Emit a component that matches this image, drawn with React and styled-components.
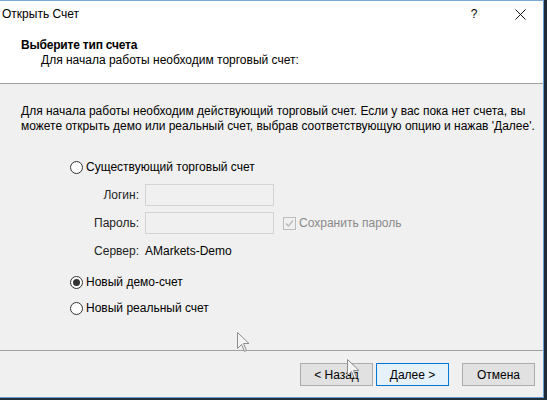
import React from 'react';
import styled, { createGlobalStyle } from 'styled-components';

const GlobalStyle = createGlobalStyle`
  html, body {
    margin: 0;
    padding: 0;
    background: #f0f0f0;
  }
  body {
    font-family: "Liberation Sans", Arial, sans-serif;
    font-size: 12px;
    color: #000;
  }
`;

const Screen = styled.div`
  position: relative;
  width: 547px;
  height: 400px;
  overflow: hidden;
  background: #1f2a36;
`;

const Window = styled.div`
  width: 544px;
  height: 398px;
  display: flex;
  flex-direction: column;
  background: #f0f0f0;
  border-right: 1px solid #6b9bcb;
  border-bottom: 1px solid #6b9bcb;
  border-top: 1px solid #7aa6d2;
  box-sizing: border-box;
`;

const TitleBar = styled.div`
  height: 28px;
  display: flex;
  align-items: center;
  background: #fff;
  padding-left: 2px;
`;

const TitleText = styled.div`
  flex: 1;
  margin-top: -2px;
`;

const TitleButton = styled.div`
  width: 46px;
  height: 28px;
  display: flex;
  align-items: center;
  justify-content: center;
  margin-top: -2px;
`;

const Header = styled.div`
  height: 55px;
  background: #fff;
  border-bottom: 1px solid #a0a0a0;
  padding: 9px 0 0 21px;
  box-sizing: border-box;
`;

const HeaderTitle = styled.div`
  font-weight: bold;
  line-height: 15px;
  letter-spacing: -0.2px;
`;

const HeaderSub = styled.div`
  padding-left: 20px;
  line-height: 15px;
`;

const Body = styled.div`
  flex: 1;
  padding: 20px 0 0 21px;
  border-bottom: 1px solid #a0a0a0;
  box-sizing: border-box;
`;

const Intro = styled.p`
  margin: 0;
  line-height: 15px;
  width: 515px;
`;

const Options = styled.div`
  margin: 25px 0 0 49px;
  display: flex;
  flex-direction: column;
`;

const RadioRow = styled.label`
  display: flex;
  align-items: center;
  gap: 3px;
  height: 16px;
  margin-top: ${p => p.$gap || 0}px;
`;

const RadioCircle = styled.span`
  width: 11px;
  height: 11px;
  border: 1px solid #333;
  border-radius: 50%;
  background: #fff;
  display: flex;
  align-items: center;
  justify-content: center;
  &::after {
    content: '';
    width: 7px;
    height: 7px;
    border-radius: 50%;
    background: ${p => (p.$checked ? '#333' : 'transparent')};
  }
`;

const Fields = styled.div`
  display: grid;
  grid-template-columns: 65px 129px auto;
  column-gap: 6px;
  row-gap: 6px;
  margin: 9px 0 0 4px;
  align-items: center;
`;

const FieldLabel = styled.span`
  text-align: right;
  color: #222;
`;

const Input = styled.div`
  height: 20px;
  border: 1px solid #d4d4d4;
  background: #f0f0f0;
`;

const CheckRow = styled.span`
  display: flex;
  align-items: center;
  gap: 3px;
  color: #8a8a8a;
  margin-left: 3px;
`;

const CheckBox = styled.span`
  width: 11px;
  height: 11px;
  border: 1px solid #bcbcbc;
  display: flex;
  align-items: center;
  justify-content: center;
`;

const ServerLabel = styled(FieldLabel)`
  margin-top: 1px;
`;

const ServerValue = styled.span`
  grid-column: 2 / 4;
  height: 20px;
  line-height: 20px;
  margin-top: 1px;
`;

const Footer = styled.div`
  height: 46px;
  display: flex;
  align-items: flex-start;
  padding: 12px 0 0 300px;
  box-sizing: border-box;
  gap: 3px;
`;

const Button = styled.div`
  width: 73px;
  height: 23px;
  box-sizing: border-box;
  display: flex;
  align-items: center;
  justify-content: center;
  background: ${p => (p.$focus ? '#e5f1fb' : '#e1e1e1')};
  border: 1px solid ${p => (p.$focus ? '#0078d7' : '#adadad')};
  margin-left: ${p => p.$offset || 0}px;
`;

const Cursor = styled.svg`
  position: absolute;
  left: ${p => p.$x}px;
  top: ${p => p.$y}px;
`;

const Taskbar = styled.div`
  height: 2px;
  background: #22303e;
`;

const Arrow = ({ x, y }) => (
  <Cursor $x={x} $y={y} width="14" height="22" viewBox="0 0 14 22">
    <path
      d="M0.5 0.5 L0.5 16.5 L4.5 12.5 L7.5 19.5 L9.5 18.5 L6.5 11.5 L12 11.5 Z"
      fill="#f4f4f4"
      stroke="#8c8c8c"
      strokeWidth="1"
    />
  </Cursor>
);

const App = () => (
  <>
    <GlobalStyle />
    <Screen>
      <Window>
        <TitleBar>
          <TitleText>Открыть Счет</TitleText>
          <TitleButton>?</TitleButton>
          <TitleButton>
            <svg width="11" height="11" viewBox="0 0 11 11">
              <path d="M0.5 0.5 L10.5 10.5 M10.5 0.5 L0.5 10.5" stroke="#111" strokeWidth="1" />
            </svg>
          </TitleButton>
        </TitleBar>
        <Header>
          <HeaderTitle>Выберите тип счета</HeaderTitle>
          <HeaderSub>Для начала работы необходим торговый счет:</HeaderSub>
        </Header>
        <Body>
          <Intro>
            Для начала работы необходим действующий торговый счет. Если у вас пока нет счета, вы
            можете открыть демо или реальный счет, выбрав соответствующую опцию и нажав 'Далее'.
          </Intro>
          <Options>
            <RadioRow>
              <RadioCircle />
              Существующий торговый счет
            </RadioRow>
            <Fields>
              <FieldLabel>Логин:</FieldLabel>
              <Input />
              <span />
              <FieldLabel>Пароль:</FieldLabel>
              <Input />
              <CheckRow>
                <CheckBox>
                  <svg width="9" height="9" viewBox="0 0 9 9">
                    <path d="M1 4.5 L3.5 7 L8 1.5" fill="none" stroke="#b8b8b8" strokeWidth="1.2" />
                  </svg>
                </CheckBox>
                Сохранить пароль
              </CheckRow>
              <ServerLabel>Сервер:</ServerLabel>
              <ServerValue>AMarkets-Demo</ServerValue>
            </Fields>
            <RadioRow $gap={13}>
              <RadioCircle $checked />
              Новый демо-счет
            </RadioRow>
            <RadioRow $gap={10}>
              <RadioCircle />
              Новый реальный счет
            </RadioRow>
          </Options>
        </Body>
        <Footer>
          <Button>&lt; Назад</Button>
          <Button $focus>Далее &gt;</Button>
          <Button $offset={10}>Отмена</Button>
        </Footer>
      </Window>
      <Taskbar />
      <Arrow x={237} y={332} />
      <Arrow x={347} y={359} />
    </Screen>
  </>
);

export default App;
